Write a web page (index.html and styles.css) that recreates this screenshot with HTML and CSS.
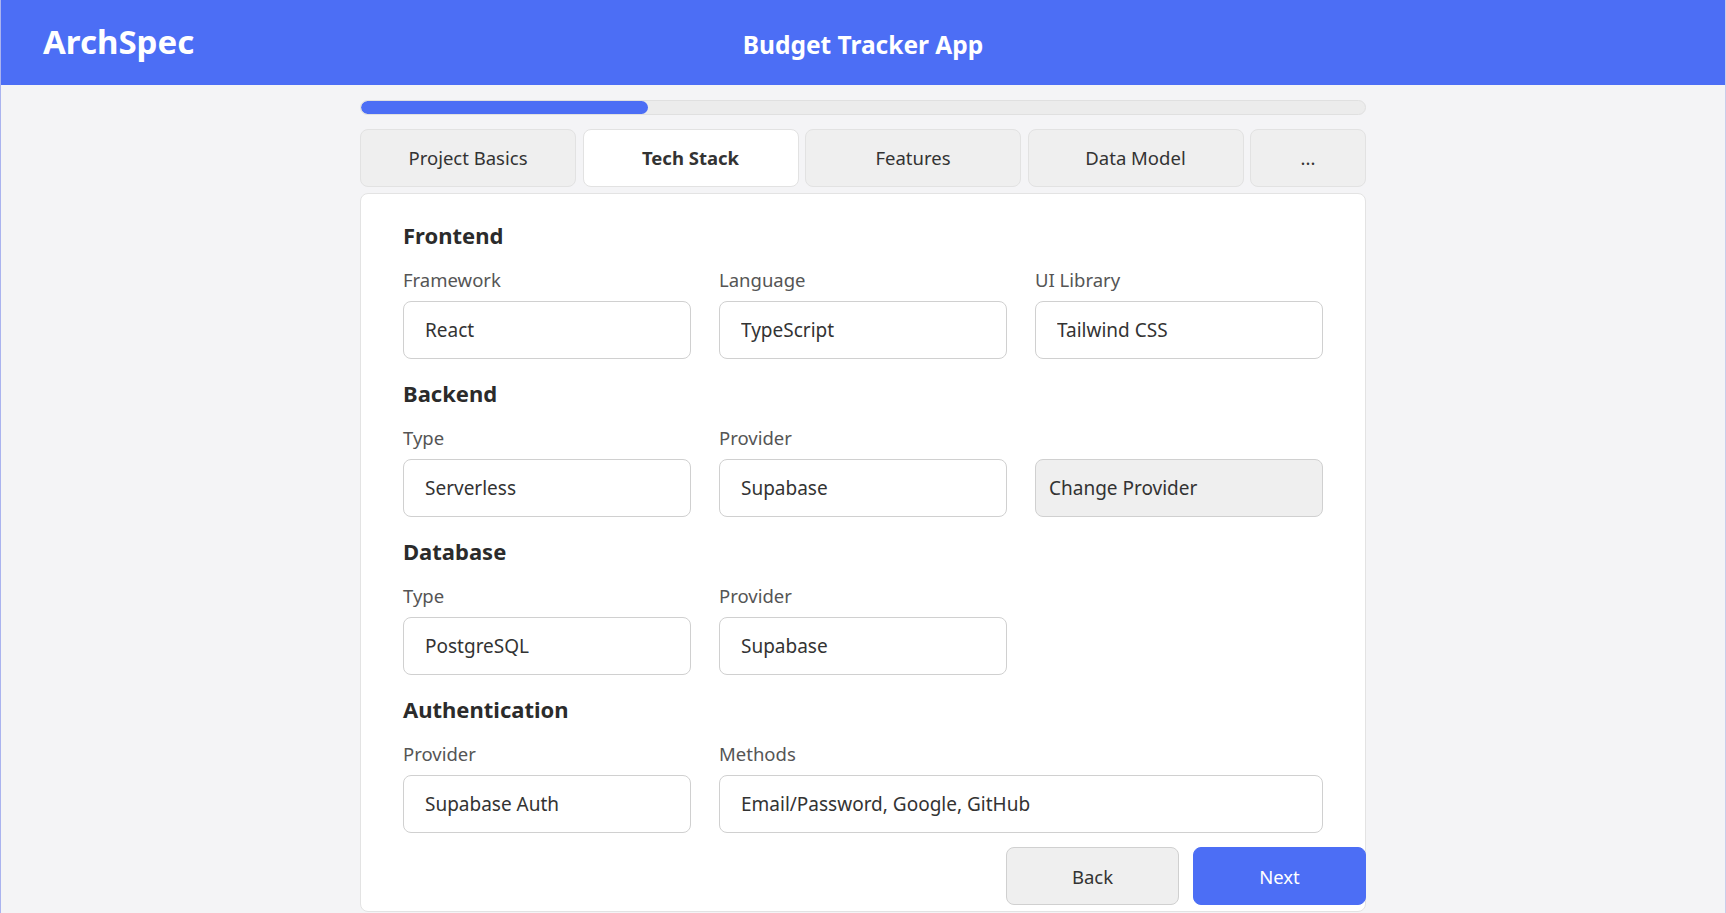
FILE: index.html
```html
<!DOCTYPE html>
<html lang="en">
<head>
<meta charset="utf-8">
<title>ArchSpec - Budget Tracker App</title>
<link rel="stylesheet" href="styles.css">
</head>
<body>
<div class="page">
  <header class="topbar">
    <div class="brand">ArchSpec</div>
    <div class="project-title">Budget Tracker App</div>
    <div class="spacer"></div>
  </header>

  <main class="wizard">
    <div class="progress"><div class="progress-fill" style="width: 28.6%"></div></div>

    <nav class="tabs">
      <button class="tab">Project Basics</button>
      <button class="tab active">Tech Stack</button>
      <button class="tab">Features</button>
      <button class="tab">Data Model</button>
      <button class="tab more">...</button>
    </nav>

    <section class="card">
      <div class="group">
        <h2 class="group-title">Frontend</h2>
        <div class="fields">
          <div class="field"><label class="field-label">Framework</label><input class="field-input" value="React"></div>
          <div class="field"><label class="field-label">Language</label><input class="field-input" value="TypeScript"></div>
          <div class="field"><label class="field-label">UI Library</label><input class="field-input" value="Tailwind CSS"></div>
        </div>
      </div>

      <div class="group">
        <h2 class="group-title">Backend</h2>
        <div class="fields">
          <div class="field"><label class="field-label">Type</label><input class="field-input" value="Serverless"></div>
          <div class="field"><label class="field-label">Provider</label><input class="field-input" value="Supabase"></div>
          <div class="field field-action"><button class="action-btn">Change Provider</button></div>
        </div>
      </div>

      <div class="group">
        <h2 class="group-title">Database</h2>
        <div class="fields">
          <div class="field"><label class="field-label">Type</label><input class="field-input" value="PostgreSQL"></div>
          <div class="field"><label class="field-label">Provider</label><input class="field-input" value="Supabase"></div>
        </div>
      </div>

      <div class="group">
        <h2 class="group-title">Authentication</h2>
        <div class="fields">
          <div class="field"><label class="field-label">Provider</label><input class="field-input" value="Supabase Auth"></div>
          <div class="field span-2"><label class="field-label">Methods</label><input class="field-input" value="Email/Password, Google, GitHub"></div>
        </div>
      </div>

      <div class="nav-buttons">
        <button class="btn btn-back">Back</button>
        <button class="btn btn-next">Next</button>
      </div>
    </section>
  </main>
</div>
</body>
</html>
```

FILE: styles.css
```css
* {
  box-sizing: border-box;
}

html, body {
  margin: 0;
  padding: 0;
}

body {
  font-family: "Noto Sans", "Open Sans", sans-serif;
  background: #f4f4f6;
  color: #333333;
  overflow: hidden;
}

.page {
  min-height: 913px;
  border-left: 1px solid #aab3ef;
  border-right: 1px solid #c9cdea;
}

.topbar {
  height: 85px;
  background: #4c6ef5;
  display: grid;
  grid-template-columns: 1fr auto 1fr;
  align-items: center;
  padding: 0 42px;
  color: #ffffff;
}

.brand {
  font-size: 33px;
  font-weight: 700;
  line-height: 1;
  margin-top: -2px;
}

.project-title {
  font-size: 24.5px;
  font-weight: 700;
  line-height: 1;
  margin-top: 6px;
}

.wizard {
  width: 1006px;
  margin: 0 auto;
  padding-top: 15px;
}

.progress {
  height: 15px;
  background: #ececec;
  border: 1px solid #e0e0e0;
  border-radius: 8px;
  overflow: hidden;
}

.progress-fill {
  height: 100%;
  background: #4c6ef5;
  border-radius: 8px;
}

.tabs {
  display: flex;
  gap: 6.5px;
  margin-top: 14px;
}

.tab {
  flex: 0 0 216px;
  height: 58px;
  border: 1px solid #e2e2e2;
  border-radius: 8px;
  background: #efefef;
  font-family: inherit;
  font-size: 18.5px;
  color: #333333;
  padding: 0 0 2px;
  cursor: pointer;
}

.tab.more {
  flex: 1 1 auto;
}

.tab.active {
  background: #ffffff;
  font-weight: 700;
}

.card {
  margin-top: 6px;
  background: #ffffff;
  border: 1px solid #e3e3e3;
  border-radius: 8px;
  padding: 26px 42px 6px;
}

.group + .group {
  margin-top: 19px;
}

.group-title {
  margin: 0 0 18px;
  font-size: 22px;
  line-height: 30px;
  font-weight: 700;
  color: #2b2b2b;
}

.fields {
  display: grid;
  grid-template-columns: repeat(3, 1fr);
  column-gap: 28px;
}

.field {
  display: flex;
  flex-direction: column;
}

.field.span-2 {
  grid-column: span 2;
}

.field-action {
  justify-content: flex-end;
}

.field-label {
  font-size: 18.5px;
  line-height: 24px;
  color: #555555;
  margin-bottom: 9px;
}

.field-input {
  height: 58px;
  border: 1px solid #d0d0d0;
  border-radius: 8px;
  padding: 0 21px;
  font-family: inherit;
  font-size: 19px;
  color: #333333;
  background: #ffffff;
  outline: none;
  width: 100%;
}

.action-btn {
  height: 58px;
  width: 100%;
  text-align: left;
  padding: 0 13px;
  border: 1px solid #d0d0d0;
  border-radius: 8px;
  background: #efefef;
  font-family: inherit;
  font-size: 19px;
  color: #333333;
}

.nav-buttons {
  display: flex;
  justify-content: flex-end;
  gap: 14px;
  margin-top: 14px;
  margin-right: -43px;
}

.btn {
  width: 173px;
  height: 58px;
  border-radius: 8px;
  font-family: inherit;
  font-size: 18.5px;
  cursor: pointer;
}

.btn-back {
  background: #efefef;
  border: 1px solid #d0d0d0;
  color: #333333;
}

.btn-next {
  background: #4c6ef5;
  border: 1px solid #4c6ef5;
  color: #ffffff;
}
```
